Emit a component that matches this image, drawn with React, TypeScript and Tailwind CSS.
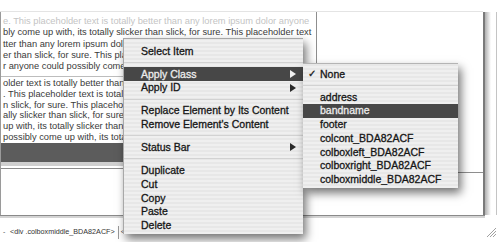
import clsx from "clsx";

type Item = { label?: string; sep?: boolean; active?: boolean; sub?: boolean; check?: boolean };

const block1 = [
  "e. This placeholder text is totally better than any lorem ipsum dolor anyone",
  "bly come up with, its totally slicker than slick, for sure. This placeholder text",
  "tter than any lorem ipsum dolor anyone could possibly come up with, its",
  "er than slick, for sure. This placeholder text is totally better than any",
  "r anyone could possibly come up with, its totally slicker than slick, for",
];

const block2 = [
  "older text is totally better than any lorem ipsum dolor anyone could",
  ". This placeholder text is totally better than any lorem ipsum dolor",
  "n slick, for sure. This placeholder text is totally better than any",
  "ally slicker than slick, for sure. This placeholder text is totally",
  "up with, its totally slicker than slick, for sure. This placeholder",
  "possibly come up with, its totally slicker than slick, for sure.",
];

const mainMenu: Item[] = [
  { label: "Select Item" },
  { sep: true },
  { label: "Apply Class", active: true, sub: true },
  { label: "Apply ID", sub: true },
  { sep: true },
  { label: "Replace Element by Its Content" },
  { label: "Remove Element's Content" },
  { sep: true },
  { label: "Status Bar", sub: true },
  { sep: true },
  { label: "Duplicate" },
  { label: "Cut" },
  { label: "Copy" },
  { label: "Paste" },
  { label: "Delete" },
];

const classMenu: Item[] = [
  { label: "None", check: true },
  { sep: true },
  { label: "address" },
  { label: "bandname", active: true },
  { label: "footer" },
  { label: "colcont_BDA82ACF" },
  { label: "colboxleft_BDA82ACF" },
  { label: "colboxright_BDA82ACF" },
  { label: "colboxmiddle_BDA82ACF" },
];

const menuBg =
  "bg-[repeating-linear-gradient(0deg,#efefef_0px,#efefef_2px,#e7e7e7_2px,#e7e7e7_4px)]";

function Arrow({ light }: { light?: boolean }) {
  return (
    <svg width="6" height="8" viewBox="0 0 6 8" className="shrink-0">
      <polygon points="0,0 6,4 0,8" fill={light ? "#f2f2f2" : "#2a2a2a"} />
    </svg>
  );
}

function Row({ item, withCheck }: { item: Item; withCheck?: boolean }) {
  if (item.sep)
    return (
      <div className="h-[9.25px] flex items-center">
        <div className="h-px w-full bg-[#d2d2d2]" />
      </div>
    );
  return (
    <div
      className={clsx(
        "h-[13.75px] flex items-center pr-[7px] leading-none whitespace-nowrap [-webkit-text-stroke:0.3px]",
        withCheck ? "pl-[5px]" : "pl-[17px]",
        item.active ? "bg-[#474747] text-[#ececec]" : "text-[#161616]"
      )}
    >
      {withCheck && (
        <span className="w-[12px] shrink-0 text-[10px] font-['DejaVu_Sans',sans-serif]">
          {item.check ? "✓" : ""}
        </span>
      )}
      <span className="flex-1">{item.label}</span>
      {item.sub && <Arrow light={item.active} />}
    </div>
  );
}

export default function App() {
  return (
    <div className="relative w-[500px] h-[242px] overflow-hidden bg-white font-['Liberation_Sans',Arial,sans-serif]">
      {/* top strip */}
      <div className="h-[12px] w-[483px] border-b border-[#e4e4e4]" />

      {/* document area */}
      <div className="flex h-[203px]">
        <div className="w-[316px] border-l border-[#9a9a9a] overflow-hidden text-[9.3px] text-[#3a3a3a] whitespace-nowrap">
          <div className="pt-[4px] pl-[2px] leading-[11.3px]">
            {block1.map((l, i) => (
              <div key={i} className={i === 0 ? "text-[#c4c4c4]" : ""}>
                {l}
              </div>
            ))}
          </div>
          <div className="mt-[3.5px] border-t border-[#bdbdbd] pt-[1px] pl-[2px] leading-[10.8px]">
            {block2.map((l, i) => (
              <div key={i}>{l}</div>
            ))}
          </div>
          <div className="h-[19px] bg-[#5c5c5c]" />
          <div className="h-[4px] bg-[#cfcfcf]" />
          <div className="h-[2px]" />
          <div className="h-px bg-[#8a8a8a]" />
        </div>

        <div className="w-[167px] flex flex-col">
          <div className="h-[161px] border-l border-b border-[#8e8e8e]" />
        </div>

        <div className="flex-1 flex">
          <div className="w-[2px] bg-[#7a7a7a]" />
          <div className="w-[6px] bg-[linear-gradient(to_right,#b0b0b0,#ffffff)]" />
          <div className="w-[5px]" />
          <div className="w-px bg-[#c4c4c4]" />
        </div>
      </div>

      {/* bottom lines */}
      <div className="h-px w-[485px] bg-[#8a8a8a]" />
      <div className="h-[2px] w-[485px] bg-[#d4d4d4]" />

      {/* status bar */}
      <div className="flex items-center h-[24px] pt-[4px]">
        <span className="w-[10px] pl-[3px] text-[7px] text-[#555]">-</span>
        <span className="h-[13px] pr-[3px] border-r border-[#9a9a9a] flex items-center text-[7.2px] text-[#333]">
          &lt;div .colboxmiddle_BDA82ACF&gt;
        </span>
        <span className="pl-[2px] text-[7px] text-[#555]">&lt;</span>
        <div className="flex-1" />
        <svg width="12" height="12" viewBox="0 0 12 12" className="mr-[3px]">
          <line x1="11" y1="2" x2="2" y2="11" stroke="#a0a0a0" />
          <line x1="11" y1="5" x2="5" y2="11" stroke="#a0a0a0" />
          <line x1="11" y1="8" x2="8" y2="11" stroke="#a0a0a0" />
        </svg>
      </div>

      {/* context menu */}
      <div
        className={clsx(
          "absolute left-[123px] top-[38px] w-[180px] h-[196px] pt-[5px] text-[10.5px] border-l border-t border-[#a8a8a8] shadow-[3px_5px_9px_rgba(0,0,0,0.55)]",
          menuBg
        )}
      >
        {mainMenu.map((it, i) => (
          <Row key={i} item={it} />
        ))}
      </div>

      {/* class submenu */}
      <div
        className={clsx(
          "absolute left-[303px] top-[63px] w-[155px] h-[125px] pt-[3px] text-[10.5px] border-t border-[#b4b4b4] shadow-[3px_5px_9px_rgba(0,0,0,0.55)]",
          menuBg
        )}
      >
        {classMenu.map((it, i) => (
          <Row key={i} item={it} withCheck />
        ))}
      </div>
    </div>
  );
}
